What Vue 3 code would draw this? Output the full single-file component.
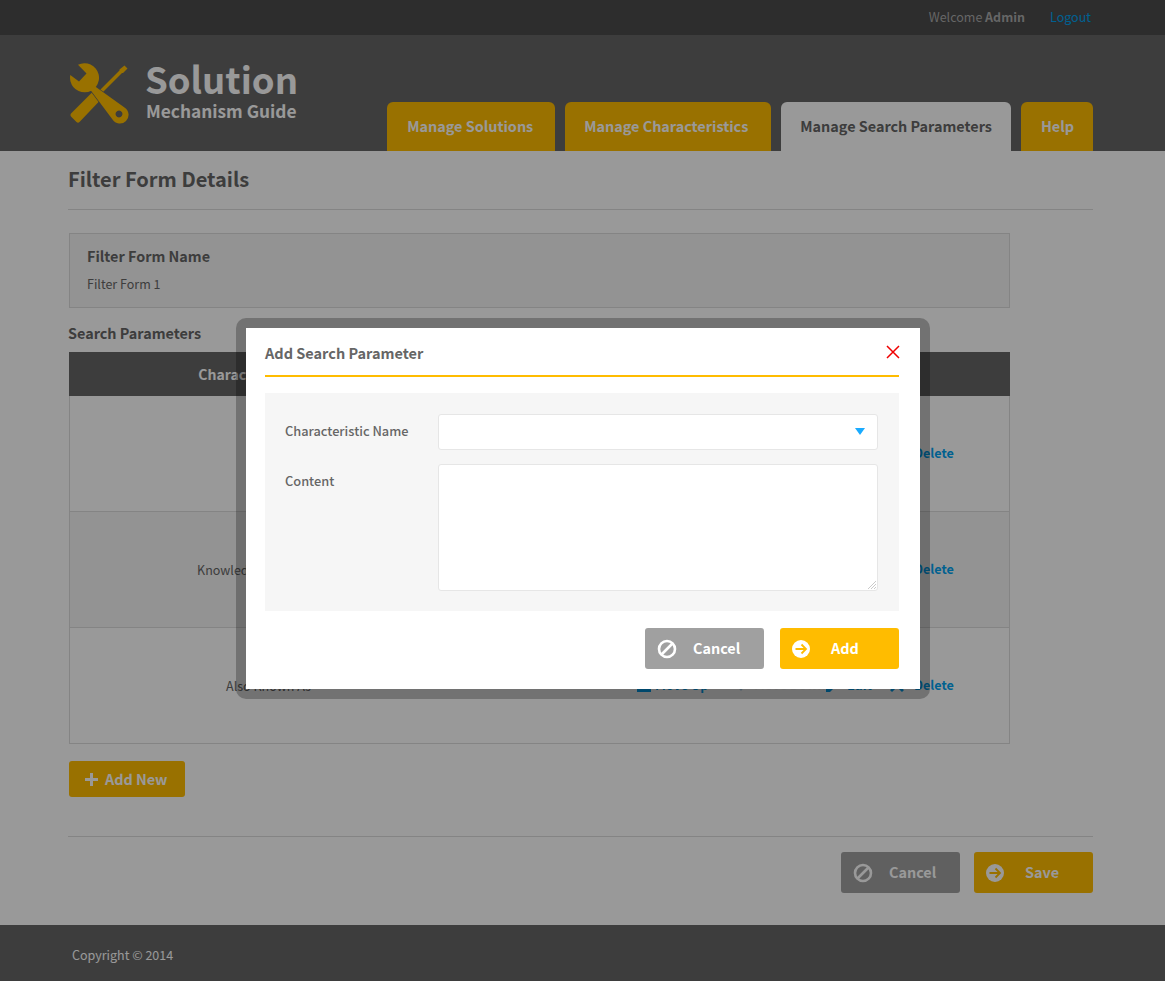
<template>
  <div class="page">
    <div class="topbar">
      <div class="wrap topbar-in">
        <span class="welcome">Welcome <b>Admin</b></span>
        <a class="logout">Logout</a>
      </div>
    </div>

    <header class="header">
      <div class="wrap header-in">
        <div class="brand">
          <svg class="logo" viewBox="68 62 62 62" width="62" height="62">
            <path d="M124.500 65.500l3 3-4.500 4.500-1 0-23 23-2.500-2.500 23-23 0-1z" fill="#ffbc00" />
            <path d="M91 93.500l2-2 8 8-2 2-19.500 20.500q-1.500 1.300-3 0l-5.500-5.500q-1.300-1.500 0-3z" fill="#ffbc00" />
            <path fill="#ffbc00" fill-rule="evenodd" stroke="#666" stroke-width="1.300" paint-order="stroke" d="M90.500 90l4-4 30 21.500a8.700 8.700 0 1 1-12 12zM119 110.600a3.400 3.400 0 1 0 .01 0z" />
            <path fill="#ffbc00" d="M78 64.800A14.500 14.500 0 1 1 70.300 75l8.700 6.500 7.500-8z" />
          </svg>
          <div class="brand-text">
            <div class="brand-name">Solution</div>
            <div class="brand-sub">Mechanism Guide</div>
          </div>
        </div>
        <nav class="tabs">
          <a v-for="tab in tabs" :key="tab" class="tab" :class="{ active: tab === activeTab }">{{ tab }}</a>
        </nav>
      </div>
    </header>

    <main class="wrap main">
      <h1 class="title">Filter Form Details</h1>

      <section class="panel">
        <h3>Filter Form Name</h3>
        <p>Filter Form 1</p>
      </section>

      <h2 class="sub-title">Search Parameters</h2>
      <table class="params">
        <thead>
          <tr>
            <th class="col-name">Characteristic Name</th>
            <th>Actions</th>
          </tr>
        </thead>
        <tbody>
          <tr v-for="(row, i) in rows" :key="row">
            <td class="col-name">{{ row }}</td>
            <td>
              <div class="actions">
                <a
                  v-for="act in actions"
                  :key="act.label"
                  class="action"
                  :class="{ off: act.label === 'Move Down' && i === rows.length - 1 }"
                >
                  <svg viewBox="0 0 14 14" width="14" height="14"><path :d="act.icon" fill="currentColor" /></svg>
                  <span>{{ act.label }}</span>
                </a>
              </div>
            </td>
          </tr>
        </tbody>
      </table>

      <button class="btn add-new">
        <svg viewBox="0 0 13 13" width="13" height="13"><path d="M5 0h3v5h5v3H8v5H5V8H0V5h5z" fill="currentColor" /></svg>
        <span>Add New</span>
      </button>

      <div class="form-actions">
        <button class="btn wide grey">
          <svg class="ico" viewBox="0 0 20 20" width="20" height="20"><circle cx="10" cy="10" r="8" fill="none" stroke="currentColor" stroke-width="2.600" /><path d="M4.500 15.500l11-11" stroke="currentColor" stroke-width="2.600" /></svg>
          <span>Cancel</span>
        </button>
        <button class="btn wide">
          <svg class="ico" viewBox="0 0 20 20" width="20" height="20"><circle cx="10" cy="10" r="9" fill="currentColor" /><path d="M4.500 10h10M10.500 5.500l4.500 4.500-4.500 4.500" fill="none" stroke="#ffbc00" stroke-width="1.800" /></svg>
          <span>Save</span>
        </button>
      </div>
    </main>

    <footer class="footer">
      <div class="wrap">Copyright © 2014</div>
    </footer>

    <!-- modal -->
    <div class="overlay"></div>
    <div class="modal">
      <div class="modal-head">
        <h3>Add Search Parameter</h3>
        <svg class="close" viewBox="0 0 14 14" width="14" height="14"><path d="M1 1l12 12M13 1L1 13" stroke="#f00000" stroke-width="1.500" fill="none" /></svg>
      </div>
      <div class="modal-form">
        <div class="field">
          <label>Characteristic Name</label>
          <div class="select"><i class="caret"></i></div>
        </div>
        <div class="field">
          <label>Content</label>
          <div class="text-wrap">
            <textarea class="text"></textarea>
            <svg class="grip" viewBox="0 0 8 8" width="8" height="8"><path d="M0 8l8-8M3 8l5-5M6 8l2-2" stroke="#bdbdbd" stroke-width="0.800" fill="none" /></svg>
          </div>
        </div>
      </div>
      <div class="modal-actions">
        <button class="btn wide grey">
          <svg class="ico" viewBox="0 0 20 20" width="20" height="20"><circle cx="10" cy="10" r="8" fill="none" stroke="currentColor" stroke-width="2.600" /><path d="M4.500 15.500l11-11" stroke="currentColor" stroke-width="2.600" /></svg>
          <span>Cancel</span>
        </button>
        <button class="btn wide">
          <svg class="ico" viewBox="0 0 20 20" width="20" height="20"><circle cx="10" cy="10" r="9" fill="currentColor" /><path d="M4.500 10h10M10.500 5.500l4.500 4.500-4.500 4.500" fill="none" stroke="#ffbc00" stroke-width="1.800" /></svg>
          <span>Add</span>
        </button>
      </div>
    </div>
  </div>
</template>

<script setup>
const tabs = ['Manage Solutions', 'Manage Characteristics', 'Manage Search Parameters', 'Help']
const activeTab = 'Manage Search Parameters'

const rows = ['Name', 'Knowledge Domain Area', 'Also Known As']

const actions = [
  { label: 'Move Up', icon: 'M0 0h14v14H0z' },
  { label: 'Move Down', icon: 'M5 13L0 7h10z' },
  { label: 'Edit', icon: 'M0 14V10l8-8 4 4-8 8z' },
  { label: 'Delete', icon: 'M1 1l5 6-6 5 2 2 5-5 5 5 2-2-6-5 5-6h-2L7 5 3 1z' }
]
</script>

<style>
html, body { margin: 0; background: #fff; }
</style>

<style scoped>
.page {
  position: relative;
  height: 981px;
  overflow: hidden;
  display: flex;
  flex-direction: column;
  font-family: "Noto Sans CJK SC", "Noto Sans", sans-serif;
  font-size: 12.500px;
  color: #666;
  background: #fff;
}
.wrap { width: 1025px; margin-left: 68px; box-sizing: border-box; }

.topbar { height: 35px; background: #4b4b4b; flex: none; }
.topbar-in { display: flex; justify-content: flex-end; align-items: center; height: 35px; padding: 0 2px 2px 0; gap: 25px; }
.welcome { color: #aaa; }
.logout { color: #00a2f0; }

.header { height: 116px; background: #666; flex: none; }
.header-in { display: flex; justify-content: space-between; align-items: flex-end; height: 116px; }
.brand { align-self: flex-start; display: flex; gap: 15px; padding-top: 27px; }
.logo { display: block; }
.brand-text { margin-top: -1px; }
.brand-name { font-size: 36.500px; font-weight: 700; line-height: 36px; color: #fff; }
.brand-sub { font-size: 17.300px; font-weight: 700; line-height: 24px; color: #fff; margin: 2px 0 0 1px; }
.tabs { display: flex; gap: 10px; }
.tab { height: 49px; line-height: 47px; background: #ffbc00; color: #fff; font-size: 14.400px; font-weight: 700; border-radius: 6px 6px 0 0; white-space: nowrap; }
.tab:nth-child(1) { padding: 0 22px 0 20px; }
.tab:nth-child(2) { padding: 0 23px 0 19px; }
.tab:nth-child(3) { padding: 0 19px; }
.tab:nth-child(4) { padding: 0 19px 0 20px; }
.tab.active { background: #fff; color: #666; }

.main { flex: 1; }
.title { margin: 0; height: 58px; line-height: 56px; font-size: 20px; font-weight: 700; color: #666; border-bottom: 1px solid #ddd; }
.panel { width: 941px; margin: 23px 0 0 1px; height: 75px; box-sizing: border-box; padding: 10px 17px; background: #f5f5f5; border: 1px solid #ddd; }
.panel h3 { margin: 0; font-size: 14.400px; line-height: 24px; font-weight: 700; color: #666; }
.panel p { margin: 6px 0 0; line-height: 20px; color: #666; }
.sub-title { margin: 13px 0 0; font-size: 14.400px; line-height: 24px; font-weight: 700; color: #666; height: 31px; }

.params { width: 941px; margin-left: 1px; border-collapse: separate; border-spacing: 0; table-layout: fixed; }
.params th { height: 44px; padding: 0; background: #666; color: #fff; font-size: 14px; font-weight: 700; }
.params td { height: 116px; padding: 0; border-bottom: 1px solid #ddd; box-sizing: border-box; }
.params td:first-child { border-left: 1px solid #ddd; }
.params td:last-child { border-right: 1px solid #ddd; }
.params tbody tr:nth-child(even) td { background: #f5f5f5; }
.col-name { width: 398px; text-align: center; }
.actions { display: grid; grid-template-columns: 99px 90px 64px 64px; justify-content: end; padding-right: 55px; margin-bottom: 2px; }
.action { display: flex; align-items: center; gap: 4px; color: #00a2f0; font-size: 12.600px; font-weight: 700; white-space: nowrap; }
.action:nth-child(3) { gap: 7px; }
.action:nth-child(4) { gap: 10px; }
.action.off { color: #a9cfe6; }
.action.off span { color: #f4f4f4; }

.btn { display: inline-flex; align-items: center; box-sizing: border-box; border: 0; border-radius: 3px; background: #ffbc00; color: #fff; font-family: inherit; font-size: 14.400px; font-weight: 700; padding: 0; }
.btn span { margin-top: -2px; }
.add-new { margin: 17px 0 0 1px; width: 116px; height: 36px; padding-left: 16px; gap: 7px; }
.wide { width: 119px; height: 41px; padding-left: 11px; }
.wide span { margin-left: 20px; }
.wide.grey { background: #a0a0a0; padding-left: 12px; }
.wide.grey span { margin-left: 16px; }
.form-actions { display: flex; justify-content: flex-end; gap: 14px; margin-top: 39px; padding-top: 15px; border-top: 1px solid #ddd; }

.footer { height: 56px; flex: none; background: #666; color: #fff; line-height: 60px; }
.footer .wrap { padding-left: 4px; }

.overlay { position: absolute; inset: 0; background: rgba(0, 0, 0, 0.4); }
.modal {
  position: absolute;
  left: 236px;
  top: 318px;
  width: 694px;
  height: 381px;
  box-sizing: border-box;
  border: 10px solid rgba(0, 0, 0, 0.25);
  border-radius: 10px;
  background: #fff;
  background-clip: padding-box;
  padding: 0 21px 0 19px;
}
.modal-head { position: relative; height: 47px; border-bottom: 2px solid #ffbc00; }
.modal-head h3 { margin: 0; font-size: 14.500px; font-weight: 700; line-height: 49px; color: #666; }
.close { position: absolute; right: -1px; top: 17px; }
.modal-form { margin-top: 16px; height: 218px; box-sizing: border-box; padding: 21px 21px 0 20px; background: #f6f6f6; }
.field { display: flex; margin-bottom: 14px; }
.field label { width: 153px; flex: none; font-weight: 500; font-size: 12.800px; line-height: 34px; color: #666; }
.select { position: relative; width: 440px; height: 36px; box-sizing: border-box; background: #fff; border: 1px solid #e6e6e6; border-radius: 3px; }
.caret { position: absolute; right: 12px; top: 13px; border: 5px solid transparent; border-top: 7px solid #1aabff; border-bottom: 0; }
.text-wrap { position: relative; }
.text { display: block; width: 440px; height: 127px; box-sizing: border-box; margin: 0; background: #fff; border: 1px solid #e6e6e6; border-radius: 3px; resize: none; }
.grip { position: absolute; right: 2px; bottom: 2px; }
.modal-actions { display: flex; justify-content: flex-end; gap: 16px; margin-top: 17px; }
</style>
